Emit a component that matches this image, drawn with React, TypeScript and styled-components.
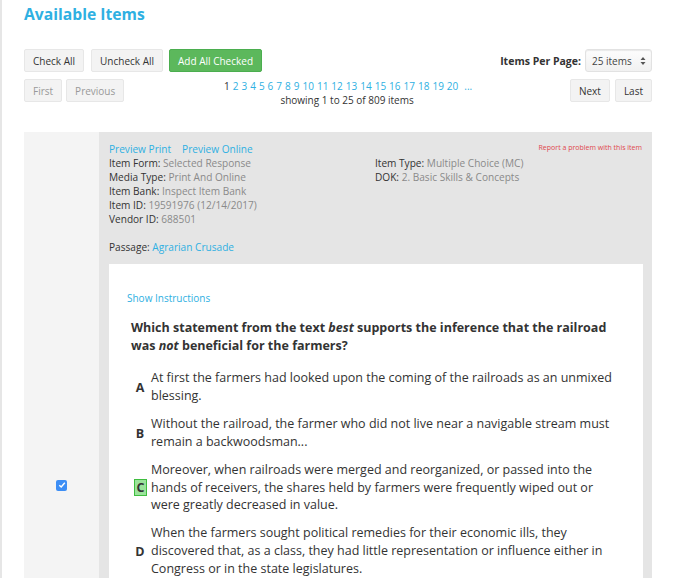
import React from "react";
import styled, { createGlobalStyle } from "styled-components";

const Global = createGlobalStyle`
  html, body { margin: 0; padding: 0; background: #fff; }
  body { font-family: "Open Sans", "Liberation Sans", sans-serif; color: #333; }
  * { box-sizing: border-box; }
`;

const BLUE = "#2fb0e2";

const Page = styled.div`
  border-left: 2px solid #e6e6e6;
  min-height: 578px;
  padding: 0 48px 0 22px;
`;

const Title = styled.h2`
  margin: 0;
  padding-top: 4px;
  font-size: 15.7px;
  font-weight: 700;
  color: ${BLUE};
  line-height: 20px;
`;

const Row = styled.div<{ $mt: number; $align?: string }>`
  display: flex;
  align-items: ${(p) => p.$align ?? "center"};
  margin-top: ${(p) => p.$mt}px;
`;

const Group = styled.div<{ $gap?: number }>`
  display: flex;
  align-items: center;
  gap: ${(p) => p.$gap ?? 5}px;
`;

const Btn = styled.button<{ $variant?: "green" | "disabled" | "default" }>`
  height: 23px;
  padding: 0 8px;
  border-radius: 2px;
  font-family: inherit;
  font-size: 10px;
  cursor: pointer;
  border: 1px solid
    ${(p) => (p.$variant === "green" ? "#4bae4f" : "#e7e7e7")};
  background: ${(p) => (p.$variant === "green" ? "#5cb85c" : "#f3f3f3")};
  color: ${(p) =>
    p.$variant === "green" ? "#fff" : p.$variant === "disabled" ? "#999" : "#333"};
`;

const Spacer = styled.div`
  flex: 1;
`;

const Center = styled.div`
  flex: 1;
  text-align: center;
  font-size: 10px;
  line-height: 14px;
`;

const PageLinks = styled.div`
  padding-left: 2px;
`;

const PageNum = styled.a<{ $current?: boolean }>`
  color: ${(p) => (p.$current ? "#333" : BLUE)};
  text-decoration: none;
  margin-right: 3px;
  cursor: pointer;
`;

const Ellipsis = styled.a`
  color: ${BLUE};
  margin-left: 3px;
`;

const PerPageLabel = styled.label`
  font-size: 10.5px;
  font-weight: 700;
  margin-right: 4px;
`;

const Select = styled.div`
  width: 67px;
  height: 23px;
  border: 1px solid #e2e2e2;
  border-radius: 3px;
  background: linear-gradient(#fdfdfd, #f1f1f1);
  box-shadow: inset 0 1px 1px rgba(0, 0, 0, 0.08);
  display: flex;
  align-items: center;
  justify-content: space-between;
  padding: 0 5px 0 6px;
  font-size: 10px;
  color: #444;
`;

const Card = styled.div`
  display: grid;
  grid-template-columns: 75px 1fr;
  margin-top: 25px;
  min-height: 706px;
`;

const SideCell = styled.div`
  background: #f4f4f4;
  display: flex;
  align-items: center;
  justify-content: center;
`;

const Check = styled.span`
  width: 11px;
  height: 11px;
  border-radius: 2px;
  background: #3d8ef5;
  display: inline-flex;
  align-items: center;
  justify-content: center;
`;

const Panel = styled.div`
  background: #e5e5e5;
  padding: 10px 9px 10px 10px;
`;

const Meta = styled.div`
  font-size: 10.1px;
  line-height: 14px;
`;

const TopLine = styled.div`
  display: flex;
  align-items: flex-start;
  justify-content: space-between;
`;

const Link = styled.a<{ $gap?: number }>`
  color: ${BLUE};
  text-decoration: none;
  margin-right: ${(p) => p.$gap ?? 0}px;
  cursor: pointer;
`;

const Report = styled.a`
  color: #e0474c;
  font-size: 7px;
  line-height: 10px;
  margin-top: 1px;
  margin-right: 1px;
`;

const MetaGrid = styled.div`
  display: grid;
  grid-template-columns: 266px 1fr;
`;

const Label = styled.span`
  color: #333;
`;

const Value = styled.span`
  color: #8a8a8a;
`;

const Passage = styled.div`
  margin-top: 14px;
`;

const ItemBox = styled.div`
  background: #fff;
  margin-top: 10px;
  padding: 27px 26px 30px 18px;
`;

const ShowInstr = styled.a`
  display: block;
  color: ${BLUE};
  font-size: 10px;
  line-height: 14px;
`;

const Question = styled.p`
  margin: 14px 0 0 4px;
  font-size: 12.5px;
  font-weight: 700;
  line-height: 18px;
`;

const Options = styled.div`
  margin-top: 14px;
  display: flex;
  flex-direction: column;
  gap: 10.5px;
`;

const Option = styled.div`
  display: flex;
  align-items: center;
`;

const Letter = styled.span<{ $correct?: boolean }>`
  font-weight: 700;
  font-size: 12.5px;
  display: flex;
  justify-content: center;
  align-items: center;
  height: 17px;
  margin-right: 4px;
  padding-top: 2px;
  ${(p) =>
    p.$correct
      ? `background:#9be39b;border:1px solid #3fbd3f;width:13px;margin-left:7px;padding-top:1px;`
      : `width:14px;margin-left:6px;`}
`;

const OptText = styled.div`
  font-size: 12.5px;
  line-height: 17.7px;
  flex: 1;
`;

const pages = Array.from({ length: 20 }, (_, i) => i + 1);

const options = [
  {
    l: "A",
    t: "At first the farmers had looked upon the coming of the railroads as an unmixed blessing.",
  },
  {
    l: "B",
    t: "Without the railroad, the farmer who did not live near a navigable stream must remain a backwoodsman...",
  },
  {
    l: "C",
    t: "Moreover, when railroads were merged and reorganized, or passed into the hands of receivers, the shares held by farmers were frequently wiped out or were greatly decreased in value.",
    c: true,
  },
  {
    l: "D",
    t: "When the farmers sought political remedies for their economic ills, they discovered that, as a class, they had little representation or influence either in Congress or in the state legislatures.",
  },
];

export default function App() {
  return (
    <>
      <Global />
      <Page>
        <Title>Available Items</Title>
        <Row $mt={25}>
          <Group $gap={6}>
            <Btn>Check All</Btn>
            <Btn style={{ marginLeft: 1 }}>Uncheck All</Btn>
            <Btn $variant="green">Add All Checked</Btn>
          </Group>
          <Spacer />
          <PerPageLabel>Items Per Page:</PerPageLabel>
          <Select>
            <span>25 items</span>
            <svg width="6" height="10" viewBox="0 0 6 10">
              <path d="M0.5 4 L3 1 L5.5 4 Z M0.5 6 L3 9 L5.5 6 Z" fill="#555" />
            </svg>
          </Select>
        </Row>
        <Row $mt={7} $align="flex-start">
          <Group $gap={4}>
            <Btn $variant="disabled">First</Btn>
            <Btn $variant="disabled">Previous</Btn>
          </Group>
          <Center>
            <PageLinks>
              {pages.map((n) => (
                <PageNum key={n} $current={n === 1}>
                  {n}
                </PageNum>
              ))}
              <Ellipsis>...</Ellipsis>
            </PageLinks>
            <div>showing 1 to 25 of 809 items</div>
          </Center>
          <Group $gap={5}>
            <Btn>Next</Btn>
            <Btn>Last</Btn>
          </Group>
        </Row>
        <Card>
          <SideCell>
            <Check>
              <svg width="8" height="8" viewBox="0 0 8 8">
                <path
                  d="M1.3 4.2 L3.2 6 L6.8 1.8"
                  stroke="#fff"
                  strokeWidth="1.4"
                  fill="none"
                />
              </svg>
            </Check>
          </SideCell>
          <Panel>
            <Meta>
              <TopLine>
                <div>
                  <Link $gap={11}>Preview Print</Link>
                  <Link>Preview Online</Link>
                </div>
                <Report>Report a problem with this item</Report>
              </TopLine>
              <MetaGrid>
                <div>
                  <div>
                    <Label>Item Form: </Label>
                    <Value>Selected Response</Value>
                  </div>
                  <div>
                    <Label>Media Type: </Label>
                    <Value>Print And Online</Value>
                  </div>
                  <div>
                    <Label>Item Bank: </Label>
                    <Value>Inspect Item Bank</Value>
                  </div>
                  <div>
                    <Label>Item ID: </Label>
                    <Value>19591976 (12/14/2017)</Value>
                  </div>
                  <div>
                    <Label>Vendor ID: </Label>
                    <Value>688501</Value>
                  </div>
                </div>
                <div>
                  <div>
                    <Label>Item Type: </Label>
                    <Value>Multiple Choice (MC)</Value>
                  </div>
                  <div>
                    <Label>DOK: </Label>
                    <Value>2. Basic Skills &amp; Concepts</Value>
                  </div>
                </div>
              </MetaGrid>
              <Passage>
                <Label>Passage: </Label>
                <Link>Agrarian Crusade</Link>
              </Passage>
            </Meta>
            <ItemBox>
              <ShowInstr>Show Instructions</ShowInstr>
              <Question>
                Which statement from the text <em>best</em> supports the inference that the
                railroad was <em>not</em> beneficial for the farmers?
              </Question>
              <Options>
                {options.map((o) => (
                  <Option key={o.l}>
                    <Letter $correct={o.c}>{o.l}</Letter>
                    <OptText>{o.t}</OptText>
                  </Option>
                ))}
              </Options>
            </ItemBox>
          </Panel>
        </Card>
      </Page>
    </>
  );
}
